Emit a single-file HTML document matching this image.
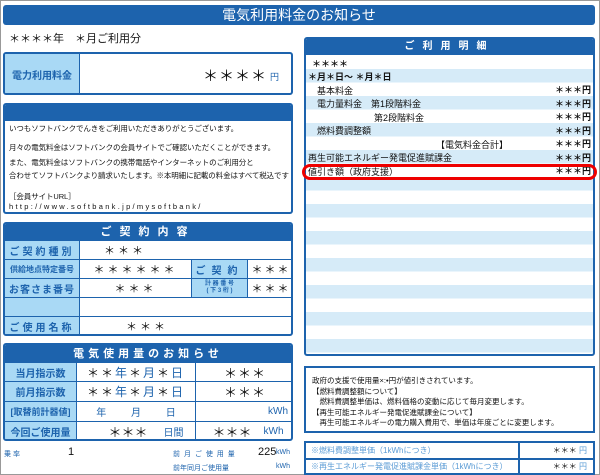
<!DOCTYPE html>
<html><head><meta charset="utf-8"><style>
*{margin:0;padding:0;box-sizing:border-box}
body{width:600px;height:475px;background:#fff;position:relative;overflow:hidden;font-family:"Liberation Sans","Noto Sans CJK JP",sans-serif;color:#111}
.a{position:absolute;white-space:nowrap}
.box{position:absolute;border:2px solid #1d63ad;border-radius:3px;overflow:hidden;background:#fff}
.hd{background:#1d63ad;color:#fff;text-align:center;font-weight:bold}
.lb{position:absolute;background:#a9d9f5;color:#1d63ad;font-weight:bold;font-size:10px;display:flex;align-items:center;justify-content:center;border:1px solid #1d63ad}
.c{position:absolute;border:1px solid #1d63ad;display:flex;align-items:center;justify-content:center;font-size:11px}
.t{position:absolute;font-size:9px;white-space:nowrap}
.m{position:absolute;left:4px;font-size:7.5px;white-space:nowrap;letter-spacing:-0.1px}
</style></head><body>
<div style="position:absolute;left:0;top:0;width:600px;height:475px;border:1px solid #999"></div>
<div class="a hd" style="left:3px;top:5px;width:592px;height:20px;border-radius:3px;font-size:14px;line-height:20px;font-weight:normal">電気利用料金のお知らせ</div>
<div class="a" style="left:9px;top:30px;font-size:11px">＊＊＊＊年　＊月ご利用分</div>

<div class="box" style="left:3px;top:52px;width:290px;height:43px">
<div class="lb" style="left:-1px;top:-1px;width:76px;height:43px;font-size:10px">電力利用料金</div>
<div class="a" style="left:198px;top:11px;font-size:15px;letter-spacing:1px">＊＊＊＊</div>
<div class="a" style="left:265px;top:16px;font-size:9px;color:#1d63ad">円</div>
</div>

<div class="box" style="left:3px;top:103px;width:290px;height:111px">
<div class="hd" style="height:16px"></div>
<div class="m" style="top:18px">いつもソフトバンクでんきをご利用いただきありがとうございます。</div>
<div class="m" style="top:37px">月々の電気料金はソフトバンクの会員サイトでご確認いただくことができます。</div>
<div class="m" style="top:52px">また、電気料金はソフトバンクの携帯電話やインターネットのご利用分と</div>
<div class="m" style="top:65px">合わせてソフトバンクより請求いたします。※本明細に記載の料金はすべて税込です</div>
<div class="m" style="top:86px">［会員サイトURL］</div>
<div class="m" style="top:97px;letter-spacing:2.3px">http://www.softbank.jp/mysoftbank/</div>
</div>

<div class="box" style="left:3px;top:222px;width:290px;height:114px">
<div class="hd" style="height:17px;font-size:11px;line-height:17px;letter-spacing:8px">ご契約内容</div>
<div class="lb" style="left:-1px;top:16px;width:76px;height:20px;letter-spacing:3px">ご契約種別</div>
<div class="c" style="left:74px;top:16px;width:216px;height:20px;justify-content:flex-start;padding-left:24px;letter-spacing:3px">＊＊＊</div>
<div class="lb" style="left:-1px;top:35px;width:76px;height:20px;font-size:8px">供給地点特定番号</div>
<div class="c" style="left:74px;top:35px;width:113px;height:20px;letter-spacing:3px">＊＊＊＊＊＊</div>
<div class="lb" style="left:186px;top:35px;width:57px;height:20px;letter-spacing:6px">ご契約</div>
<div class="c" style="left:242px;top:35px;width:48px;height:20px;letter-spacing:2px">＊＊＊</div>
<div class="lb" style="left:-1px;top:54px;width:76px;height:20px;letter-spacing:1px">お客さま番号</div>
<div class="c" style="left:74px;top:54px;width:113px;height:20px;letter-spacing:3px">＊＊＊</div>
<div class="lb" style="left:186px;top:54px;width:57px;height:20px;font-size:6px;line-height:7px;text-align:center">計 器 番 号<br>( 下 3 桁 )</div>
<div class="c" style="left:242px;top:54px;width:48px;height:20px;letter-spacing:2px">＊＊＊</div>
<div class="lb" style="left:-1px;top:73px;width:76px;height:20px"></div>
<div class="c" style="left:74px;top:73px;width:216px;height:20px"></div>
<div class="lb" style="left:-1px;top:92px;width:76px;height:20px;letter-spacing:3px">ご使用名称</div>
<div class="c" style="left:74px;top:92px;width:216px;height:20px;justify-content:flex-start;padding-left:46px;letter-spacing:3px">＊＊＊</div>
</div>

<div class="box" style="left:3px;top:343px;width:290px;height:98px">
<div class="hd" style="height:18px;font-size:11px;line-height:18px;letter-spacing:4px">電気使用量のお知らせ</div>
<div class="lb" style="left:-1px;top:17px;width:73px;height:20px;font-size:10px">当月指示数</div>
<div class="c" style="left:71px;top:17px;width:120px;height:20px;font-size:12px;color:#1d63ad;letter-spacing:2px"><span style="color:#111">＊＊</span>年 <span style="color:#111">＊</span>月 <span style="color:#111">＊</span>日</div>
<div class="c" style="left:190px;top:17px;width:100px;height:20px;font-size:13px;letter-spacing:1px">＊＊＊</div>
<div class="lb" style="left:-1px;top:36px;width:73px;height:21px">前月指示数</div>
<div class="c" style="left:71px;top:36px;width:120px;height:21px;font-size:12px;color:#1d63ad;letter-spacing:2px"><span style="color:#111">＊＊</span>年 <span style="color:#111">＊</span>月 <span style="color:#111">＊</span>日</div>
<div class="c" style="left:190px;top:36px;width:100px;height:21px;font-size:13px;letter-spacing:1px">＊＊＊</div>
<div class="lb" style="left:-1px;top:56px;width:73px;height:21px;font-size:9px">[取替前計器値]</div>
<div class="c" style="left:71px;top:56px;width:120px;height:21px;font-size:10px;color:#1d63ad;word-spacing:22px">年 月 日</div>
<div class="c" style="left:190px;top:56px;width:100px;height:21px;font-size:10px;color:#1d63ad;justify-content:flex-end;padding-right:6px">kWh</div>
<div class="lb" style="left:-1px;top:76px;width:73px;height:21px">今回ご使用量</div>
<div class="c" style="left:71px;top:76px;width:120px;height:21px;font-size:13px"><span style="margin-left:20px">＊＊＊</span><span style="font-size:10px;color:#1d63ad;margin-left:16px">日間</span></div>
<div class="c" style="left:190px;top:76px;width:100px;height:21px;font-size:13px"><span style="margin-left:6px">＊＊＊</span><span style="font-size:10px;color:#1d63ad;margin-left:12px">kWh</span></div>
</div>

<div class="t" style="left:4px;top:449px;font-size:7px;color:#1d63ad">乗 率</div>
<div class="t" style="left:68px;top:446px;font-size:11px">1</div>
<div class="t" style="left:173px;top:449px;font-size:7px;color:#1d63ad;letter-spacing:1px">前 月 ご 使 用 量</div>
<div class="t" style="left:258px;top:446px;font-size:11px">225</div>
<div class="t" style="left:276px;top:449px;font-size:7px;color:#1d63ad">kWh</div>
<div class="t" style="left:173px;top:463px;font-size:7px;color:#1d63ad">前年同月ご使用量</div>
<div class="t" style="left:276px;top:463px;font-size:7px;color:#1d63ad">kWh</div>

<div class="box" style="left:304px;top:37px;width:291px;height:319px;background:repeating-linear-gradient(#d6ebf8 0 13.5px,#fff 13.5px 27px) 0 30px / 100% 100% no-repeat">
<div class="hd" style="height:16px;font-size:10px;line-height:16px;letter-spacing:8px">ご利用明細</div>
<div style="position:absolute;left:0;top:16px;width:100%;height:14px;background:#fff"></div>
<div class="t" style="left:6px;top:18px;font-size:9px;font-weight:bold">＊＊＊＊</div>
<div class="t" style="left:2px;top:31px;font-size:9px;font-weight:bold">＊月＊日〜 ＊月＊日</div>
<div class="t" style="left:11px;top:45px">基本料金</div>
<div class="t" style="left:11px;top:58px">電力量料金　第1段階料金</div>
<div class="t" style="left:68px;top:72px">第2段階料金</div>
<div class="t" style="left:11px;top:85px">燃料費調整額</div>
<div class="t" style="left:130px;top:99px">【電気料金合計】</div>
<div class="t" style="left:2px;top:112px">再生可能エネルギー発電促進賦課金</div>
<div class="t" style="left:2px;top:126px">値引き額（政府支援）</div>
<div class="t" style="right:2px;top:45px;line-height:13.5px;text-align:right;font-weight:bold">＊＊＊円<br>＊＊＊円<br>＊＊＊円<br>＊＊＊円<br>＊＊＊円<br>＊＊＊円<br>＊＊＊円</div>
</div>
<div style="position:absolute;left:302px;top:164px;width:295px;height:16px;border:3px solid #e00;border-radius:8px"></div>

<div class="box" style="left:304px;top:366px;width:291px;height:67px;border-radius:0">
<div class="t" style="left:6px;top:8px;font-size:7.5px;line-height:10.5px">政府の支援で使用量×:•円が値引きされています。<br>【燃料費調整額について】<br>　燃料費調整単価は、燃料価格の変動に応じて毎月変更します。<br>【再生可能エネルギー発電促進賦課金について】<br>　再生可能エネルギーの電力購入費用で、単価は年度ごとに変更します。</div>
</div>
<div class="box" style="left:304px;top:441px;width:291px;height:34px;border-radius:0">
<div style="position:absolute;left:0;top:15px;width:100%;border-top:2px solid #1d63ad"></div>
<div style="position:absolute;left:212px;top:0;height:100%;border-left:2px solid #1d63ad"></div>
<div class="t" style="left:5px;top:2px;font-size:8px;color:#5a9bd5">※燃料費調整単価（1kWhにつき）</div>
<div class="t" style="left:5px;top:18px;font-size:8px;color:#5a9bd5">※再生エネルギー発電促進賦課金単価（1kWhにつき）</div>
<div class="t" style="right:6px;top:2px;font-size:8px">＊＊＊ <span style="color:#5a9bd5">円</span></div>
<div class="t" style="right:6px;top:18px;font-size:8px">＊＊＊ <span style="color:#5a9bd5">円</span></div>
</div>
</body></html>
